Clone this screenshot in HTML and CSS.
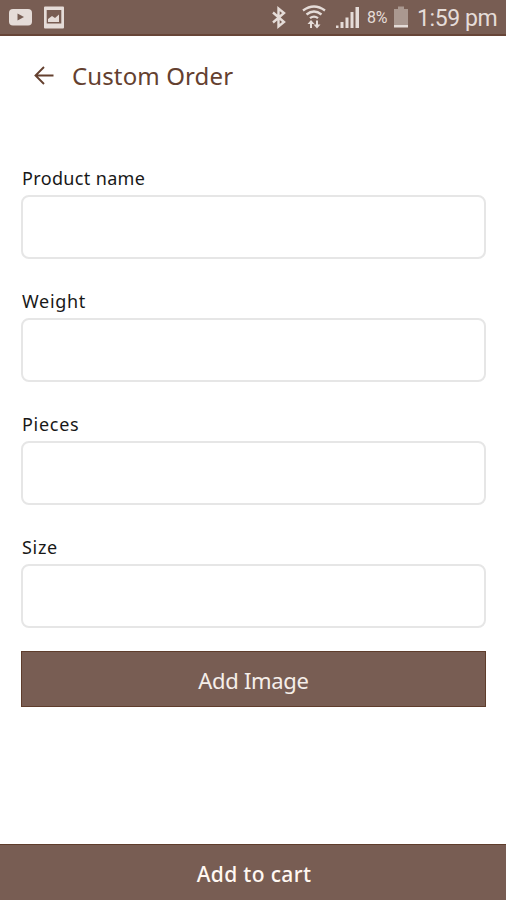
FILE: index.html
```html
<!DOCTYPE html>
<html lang="en">
<head>
<meta charset="utf-8">
<title>Custom Order</title>
<link rel="stylesheet" href="styles.css">
</head>
<body>
<div class="screen">
  <div class="status">
    <svg class="notifications" width="70" height="36" viewBox="0 0 70 36">
      <rect x="9" y="9" width="23" height="16.500" rx="4" fill="#e5dcd8"/>
      <path d="M17.500 13.500v7l6.500-3.500z" fill="#765c52"/>
      <path fill="#e5dcd8" fill-rule="evenodd" d="M45 6.500h18a1 1 0 0 1 1 1v20a1 1 0 0 1-1 1H45a1 1 0 0 1-1-1v-20a1 1 0 0 1 1-1zM46.700 10v13.500h14.600V10z"/>
      <path d="M48 22v-3l4-3 3 2 4-3.500V22z" fill="#e5dcd8"/>
    </svg>
    <svg class="signals" width="92" height="36" viewBox="270 0 92 36">
      <path d="M273 12.500l11 9.500-5.500 4.500V8.500l5.500 4.500-11 9.500" fill="none" stroke="#e5dcd8" stroke-width="2.400"/>
      <g fill="none" stroke="#e5dcd8" stroke-width="2.300">
        <path d="M303 10.500q11-8 22 0M306.500 14.500q7.500-6 15 0M310 18.200q4-3.200 8 0"/>
      </g>
      <path d="M311 20l-3.500 4h2.500v4h2v-4h2.500zM317 28.500l3.500-4H318v-4h-2v4h-2.500z" fill="#e5dcd8"/>
      <path d="M336 25.500h2.500V28H336zM340.500 22h3v6h-3zM345.500 17.500h3V28h-3zM350.500 12h3v16h-3zM355.500 7h3.500v21h-3.500z" fill="#e5dcd8"/>
    </svg>
    <span class="percent">8%</span>
    <svg class="battery" width="16" height="36" viewBox="0 0 16 36">
      <path d="M1 9h4V6.500h6V9h4v16H1z" fill="#aa9890"/>
      <path d="M1 25h14v2.500H1z" fill="#e5dcd8"/>
    </svg>
    <span class="time">1:59 pm</span>
  </div>
  <header class="header">
    <svg class="back" width="20" height="20" viewBox="0 0 20 20"><path d="M19.500 9.500H2M10 1L1.500 9.500l8.500 8.500" fill="none" stroke="#64402f" stroke-width="1.900"/></svg>
    <h1 class="title">Custom Order</h1>
  </header>
  <form class="form">
    <label class="field"><span class="label name">Product name</span><input class="input" type="text"></label>
    <label class="field"><span class="label">Weight</span><input class="input" type="text"></label>
    <label class="field"><span class="label">Pieces</span><input class="input" type="text"></label>
    <label class="field"><span class="label">Size</span><input class="input" type="text"></label>
    <button class="add-image" type="button">Add Image</button>
  </form>
  <button class="cart" type="button">Add to cart</button>
</div>
</body>
</html>
```
FILE: styles.css
```css
* { box-sizing: border-box; }
body { margin: 0; background: #fff; font-family: "Noto Sans", sans-serif; }
.screen { height: 900px; display: flex; flex-direction: column; }
.status { height: 36px; flex: none; display: flex; background: #785d53; border-bottom: 2px solid #674538; color: #e5dcd8; font-family: Roboto, sans-serif; line-height: 36px; white-space: nowrap; }
.status svg { flex: none; }
.notifications { margin-right: 200px; }
.percent { width: 26px; margin-left: 5px; font-size: 16px; letter-spacing: -0.2px; }
.time { margin-left: 8px; font-size: 23px; line-height: 38px; letter-spacing: -0.4px; }
.header { height: 80px; flex: none; display: flex; align-items: center; padding-left: 34px; gap: 18px; }
.title { margin: 0; color: #64402f; font-size: 24px; font-weight: 400; line-height: 32px; letter-spacing: 0.12px; }
.form { margin: 0; padding: 51px 20px 0 21px; display: flex; flex-direction: column; }
.field { display: flex; flex-direction: column; height: 123px; }
.label { height: 28px; padding-left: 1px; font-size: 18px; line-height: 22px; letter-spacing: 0.35px; color: #181818; }
.label:not(.name) { letter-spacing: 0.7px; }
.input { width: 100%; height: 64px; border: 2px solid #e6e6e6; border-radius: 8px; background: #fff; padding: 0 12px; font: inherit; outline: 0; }
.add-image { height: 56px; margin-top: -8px; border: 1px solid #5f3d2c; background: #785d53; color: #f5eee9; font: 22px/32px "Noto Sans", sans-serif; letter-spacing: -0.3px; padding: 1px 0 0; }
.cart { height: 56px; margin-top: auto; flex: none; border: 0; border-top: 1px solid #5f3d2c; background: #785d53; color: #fff8f2; font: 500 21px/32px "Noto Sans", sans-serif; letter-spacing: 0.35px; padding: 2px 0 0 2px; }
```
